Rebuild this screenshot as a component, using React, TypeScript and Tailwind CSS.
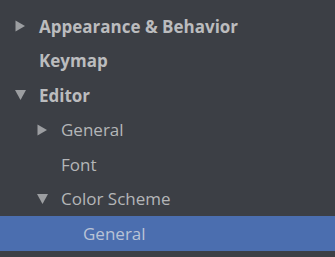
import React from "react";

const Right = () => (
  <svg width="11" height="12" viewBox="0 0 11 12" className="shrink-0">
    <path d="M0.5 0.5 L10 6 L0.5 11.5 Z" fill="#9c9ea1" />
  </svg>
);
const Down = () => (
  <svg width="11" height="12" viewBox="0 0 11 12" className="shrink-0">
    <path d="M0 1 L11 1 L5.5 11 Z" fill="#9c9ea1" />
  </svg>
);

type Row = { label: string; level: number; arrow?: "r" | "d"; bold?: boolean; sel?: boolean };

const rows: Row[] = [
  { label: "Appearance & Behavior", level: 0, arrow: "r", bold: true },
  { label: "Keymap", level: 0, bold: true },
  { label: "Editor", level: 0, arrow: "d", bold: true },
  { label: "General", level: 1, arrow: "r" },
  { label: "Font", level: 1 },
  { label: "Color Scheme", level: 1, arrow: "d" },
  { label: "General", level: 2, sel: true },
];

const pad = ["pl-[15px]", "pl-[37px]", "pl-[59px]"];

export default function App() {
  return (
    <div
      className="w-[335px] h-[257px] bg-[#3c3f45] pt-[9px] overflow-hidden"
      style={{ fontFamily: '"Open Sans", "Noto Sans", sans-serif' }}
    >
      {rows.map((r, i) => (
        <div
          key={i}
          className={`flex items-center ${r.sel ? "h-[35px]" : "h-[34.5px]"} ${pad[r.level]} ${r.sel ? "bg-[#4b6eaf]" : ""}`}
        >
          <div className="w-[24px] flex items-center">
            {r.arrow === "r" ? <Right /> : r.arrow === "d" ? <Down /> : null}
          </div>
          <span
            className={`text-[17px] leading-none ${r.bold ? "font-bold text-[#bbbcbe]" : "text-[#b4b6b8]"} ${r.sel ? "text-[#b9c3d6]" : ""}`}
          >
            {r.label}
          </span>
        </div>
      ))}
    </div>
  );
}
